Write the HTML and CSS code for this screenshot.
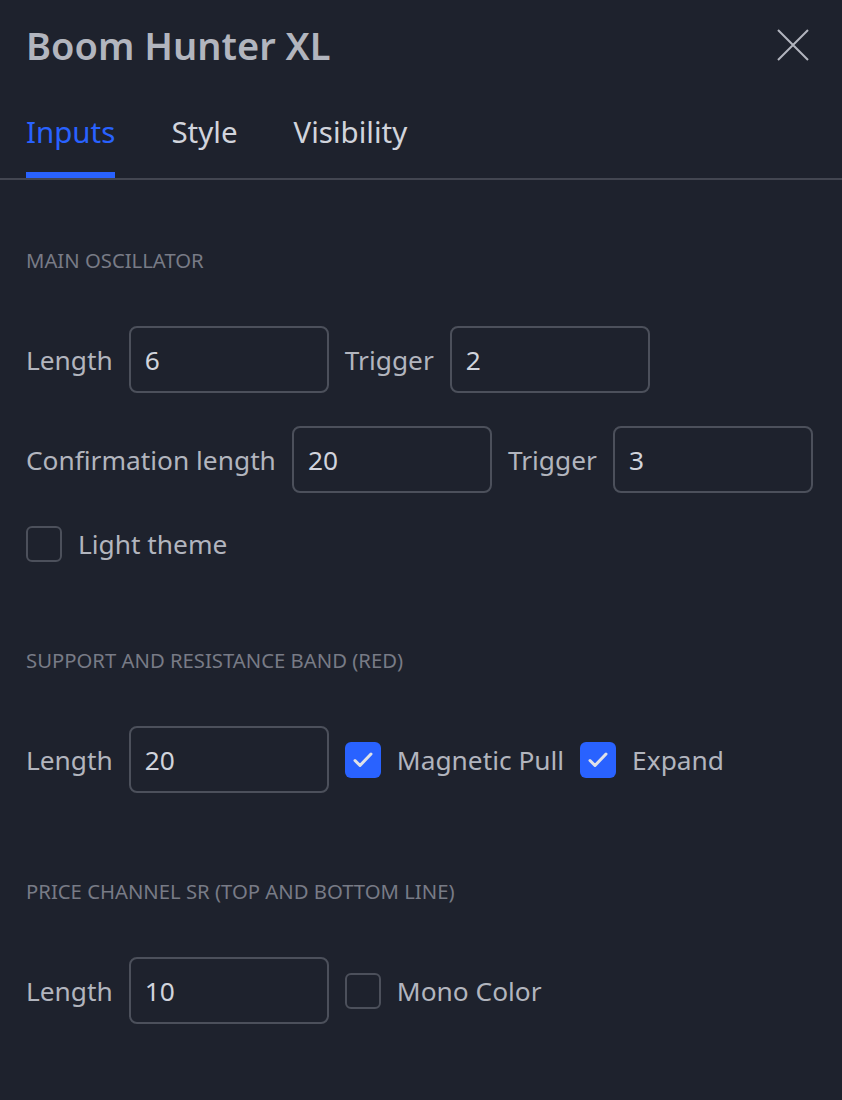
FILE: index.html
```html
<!DOCTYPE html>
<html>
<head>
<meta charset="utf-8">
<link rel="stylesheet" href="styles.css">
</head>
<body>
<div class="dialog">
  <div class="header">
    <div class="title">Boom Hunter XL</div>
    <svg class="close" width="32" height="32" viewBox="0 0 32 32"><path d="M1 1 L31 31 M31 1 L1 31" stroke="#b2b5be" stroke-width="2" fill="none"/></svg>
  </div>
  <div class="tabs">
    <div class="tab active">Inputs</div>
    <div class="tab">Style</div>
    <div class="tab">Visibility</div>
  </div>

  <div class="section first">
    <div class="sec-title">MAIN OSCILLATOR</div>
    <div class="rows">
      <div class="row">
        <span class="label">Length</span>
        <div class="input">6</div>
        <span class="label">Trigger</span>
        <div class="input">2</div>
      </div>
      <div class="row">
        <span class="label">Confirmation length</span>
        <div class="input">20</div>
        <span class="label">Trigger</span>
        <div class="input">3</div>
      </div>
      <div class="row cb-row">
        <span class="cb"></span>
        <span class="label">Light theme</span>
      </div>
    </div>
  </div>

  <div class="section">
    <div class="sec-title">SUPPORT AND RESISTANCE BAND (RED)</div>
    <div class="rows">
      <div class="row">
        <span class="label">Length</span>
        <div class="input">20</div>
        <span class="cb checked"><svg width="36" height="36" viewBox="0 0 36 36"><polyline points="10,18.5 15,23.5 26,12" fill="none" stroke="#dfe1e8" stroke-width="3" stroke-linecap="round" stroke-linejoin="round"/></svg></span>
        <span class="label">Magnetic Pull</span>
        <span class="cb checked"><svg width="36" height="36" viewBox="0 0 36 36"><polyline points="10,18.5 15,23.5 26,12" fill="none" stroke="#dfe1e8" stroke-width="3" stroke-linecap="round" stroke-linejoin="round"/></svg></span>
        <span class="label">Expand</span>
      </div>
    </div>
  </div>

  <div class="section">
    <div class="sec-title">PRICE CHANNEL SR (TOP AND BOTTOM LINE)</div>
    <div class="rows">
      <div class="row">
        <span class="label">Length</span>
        <div class="input">10</div>
        <span class="cb"></span>
        <span class="label">Mono Color</span>
      </div>
    </div>
  </div>
</div>
</body>
</html>
```

FILE: styles.css
```css
* { box-sizing: border-box; }
html, body {
  margin: 0;
  padding: 0;
  background: #1e222d;
  height: 100%;
}
body {
  font-family: "Noto Sans", "Open Sans", sans-serif;
  color: #b2b5be;
}
.dialog {
  width: 842px;
  height: 1100px;
  background: #1e222d;
}
.header {
  height: 90px;
  padding: 0 33px 0 26px;
  display: flex;
  align-items: center;
  justify-content: space-between;
}
.title {
  font-size: 38px;
  font-weight: 600;
  color: #b2b5be;
  line-height: 44px;
}
.close { display: block; }
.tabs {
  height: 90px;
  display: flex;
  gap: 56px;
  padding: 0 26px;
  border-bottom: 2px solid #434651;
}
.tab {
  height: 88px;
  display: flex;
  align-items: center;
  font-size: 29.5px;
  color: #d1d4dc;
  border-bottom: 6px solid transparent;
}
.tab.active {
  color: #2962ff;
  border-bottom-color: #2962ff;
}
.section {
  padding: 0 26px;
  margin-top: 86px;
}
.section.first { margin-top: 68px; }
.sec-title {
  font-size: 20.3px;
  line-height: 24px;
  color: #787b86;
  margin-bottom: 54px;
}
.rows {
  display: flex;
  flex-direction: column;
  gap: 33px;
}
.row {
  display: flex;
  align-items: center;
  gap: 16px;
  height: 67px;
}
.cb-row { height: 36px; }
.label {
  font-size: 26.3px;
  color: #b2b5be;
  white-space: nowrap;
}
.input {
  width: 200px;
  height: 67px;
  border: 2px solid #4c505b;
  border-radius: 8px;
  display: flex;
  align-items: center;
  padding-left: 14px;
  font-size: 26.3px;
  color: #d1d4dc;
}
.cb {
  width: 36px;
  height: 36px;
  border: 2px solid #4c505b;
  border-radius: 6px;
  flex: none;
  display: block;
}
.cb.checked {
  border: none;
  background: #2962ff;
}
.cb svg { display: block; }
```
